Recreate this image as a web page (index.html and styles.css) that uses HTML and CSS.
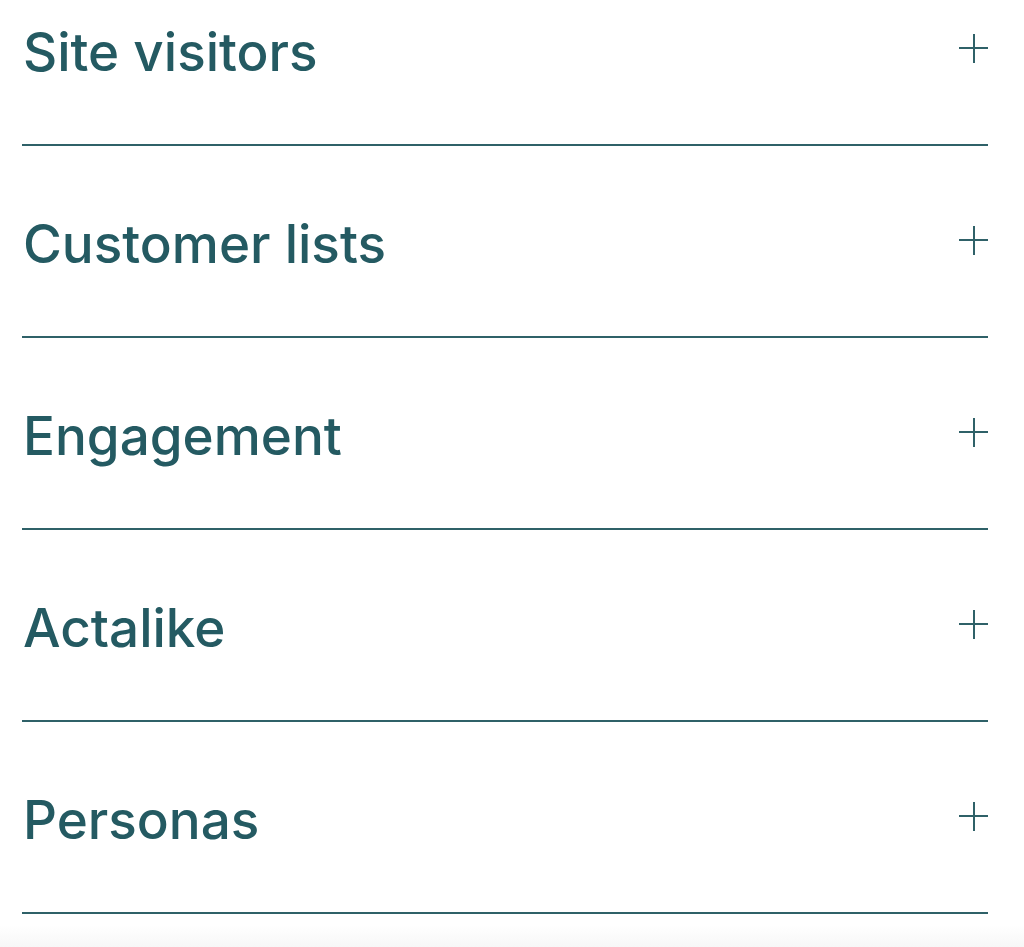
FILE: index.html
```html
<!doctype html>
<html lang="en">
<head>
	<meta charset="UTF-8">
	<title>Audiences</title>
	<link rel="stylesheet" href="styles.css">
</head>
<body>
	<div class="accordion">
		<div class="item">
			<button class="item-head">
				<span class="item-title">Site visitors</span>
				<span class="plus"></span>
			</button>
		</div>
		<div class="item">
			<button class="item-head">
				<span class="item-title">Customer lists</span>
				<span class="plus"></span>
			</button>
		</div>
		<div class="item">
			<button class="item-head">
				<span class="item-title">Engagement</span>
				<span class="plus"></span>
			</button>
		</div>
		<div class="item">
			<button class="item-head">
				<span class="item-title">Actalike</span>
				<span class="plus"></span>
			</button>
		</div>
		<div class="item">
			<button class="item-head">
				<span class="item-title">Personas</span>
				<span class="plus"></span>
			</button>
		</div>
	</div>
</body>
</html>
```

FILE: styles.css
```css
*{
	padding: 0;
	margin: 0;
	box-sizing: border-box;
}
html, body{
	height: 100%;
}
body{
	background: linear-gradient(to bottom, #fff 0, #fff 925px, #f7f7f7 947px);
	font-family: Inter, "Noto Sans", sans-serif;
	color: #245a62;
	overflow: hidden;
}
.accordion{
	margin: -46px 36px 0 22px;
}
.item{
	padding: 74px 0 68px;
	border-bottom: 2px solid #2f6168;
}
.item-head{
	width: 100%;
	display: flex;
	align-items: center;
	justify-content: space-between;
	background: none;
	border: none;
	outline: none;
	cursor: pointer;
	font: inherit;
	color: inherit;
	text-align: left;
	height: 48px;
}
.item-title{
	font-size: 53px;
	font-weight: 500;
	line-height: 48px;
	padding-left: 1px;
	letter-spacing: 0;
}
/* plus icon */
.plus{
	position: relative;
	width: 29px;
	height: 29px;
	margin-bottom: 8px;
}
.plus::before,
.plus::after{
	content: '';
	position: absolute;
	background-color: #2f6168;
}
.plus::before{
	left: 0;
	right: 0;
	top: 13px;
	height: 2px;
}
.plus::after{
	top: 0;
	bottom: 0;
	left: 14px;
	width: 2px;
}
```
